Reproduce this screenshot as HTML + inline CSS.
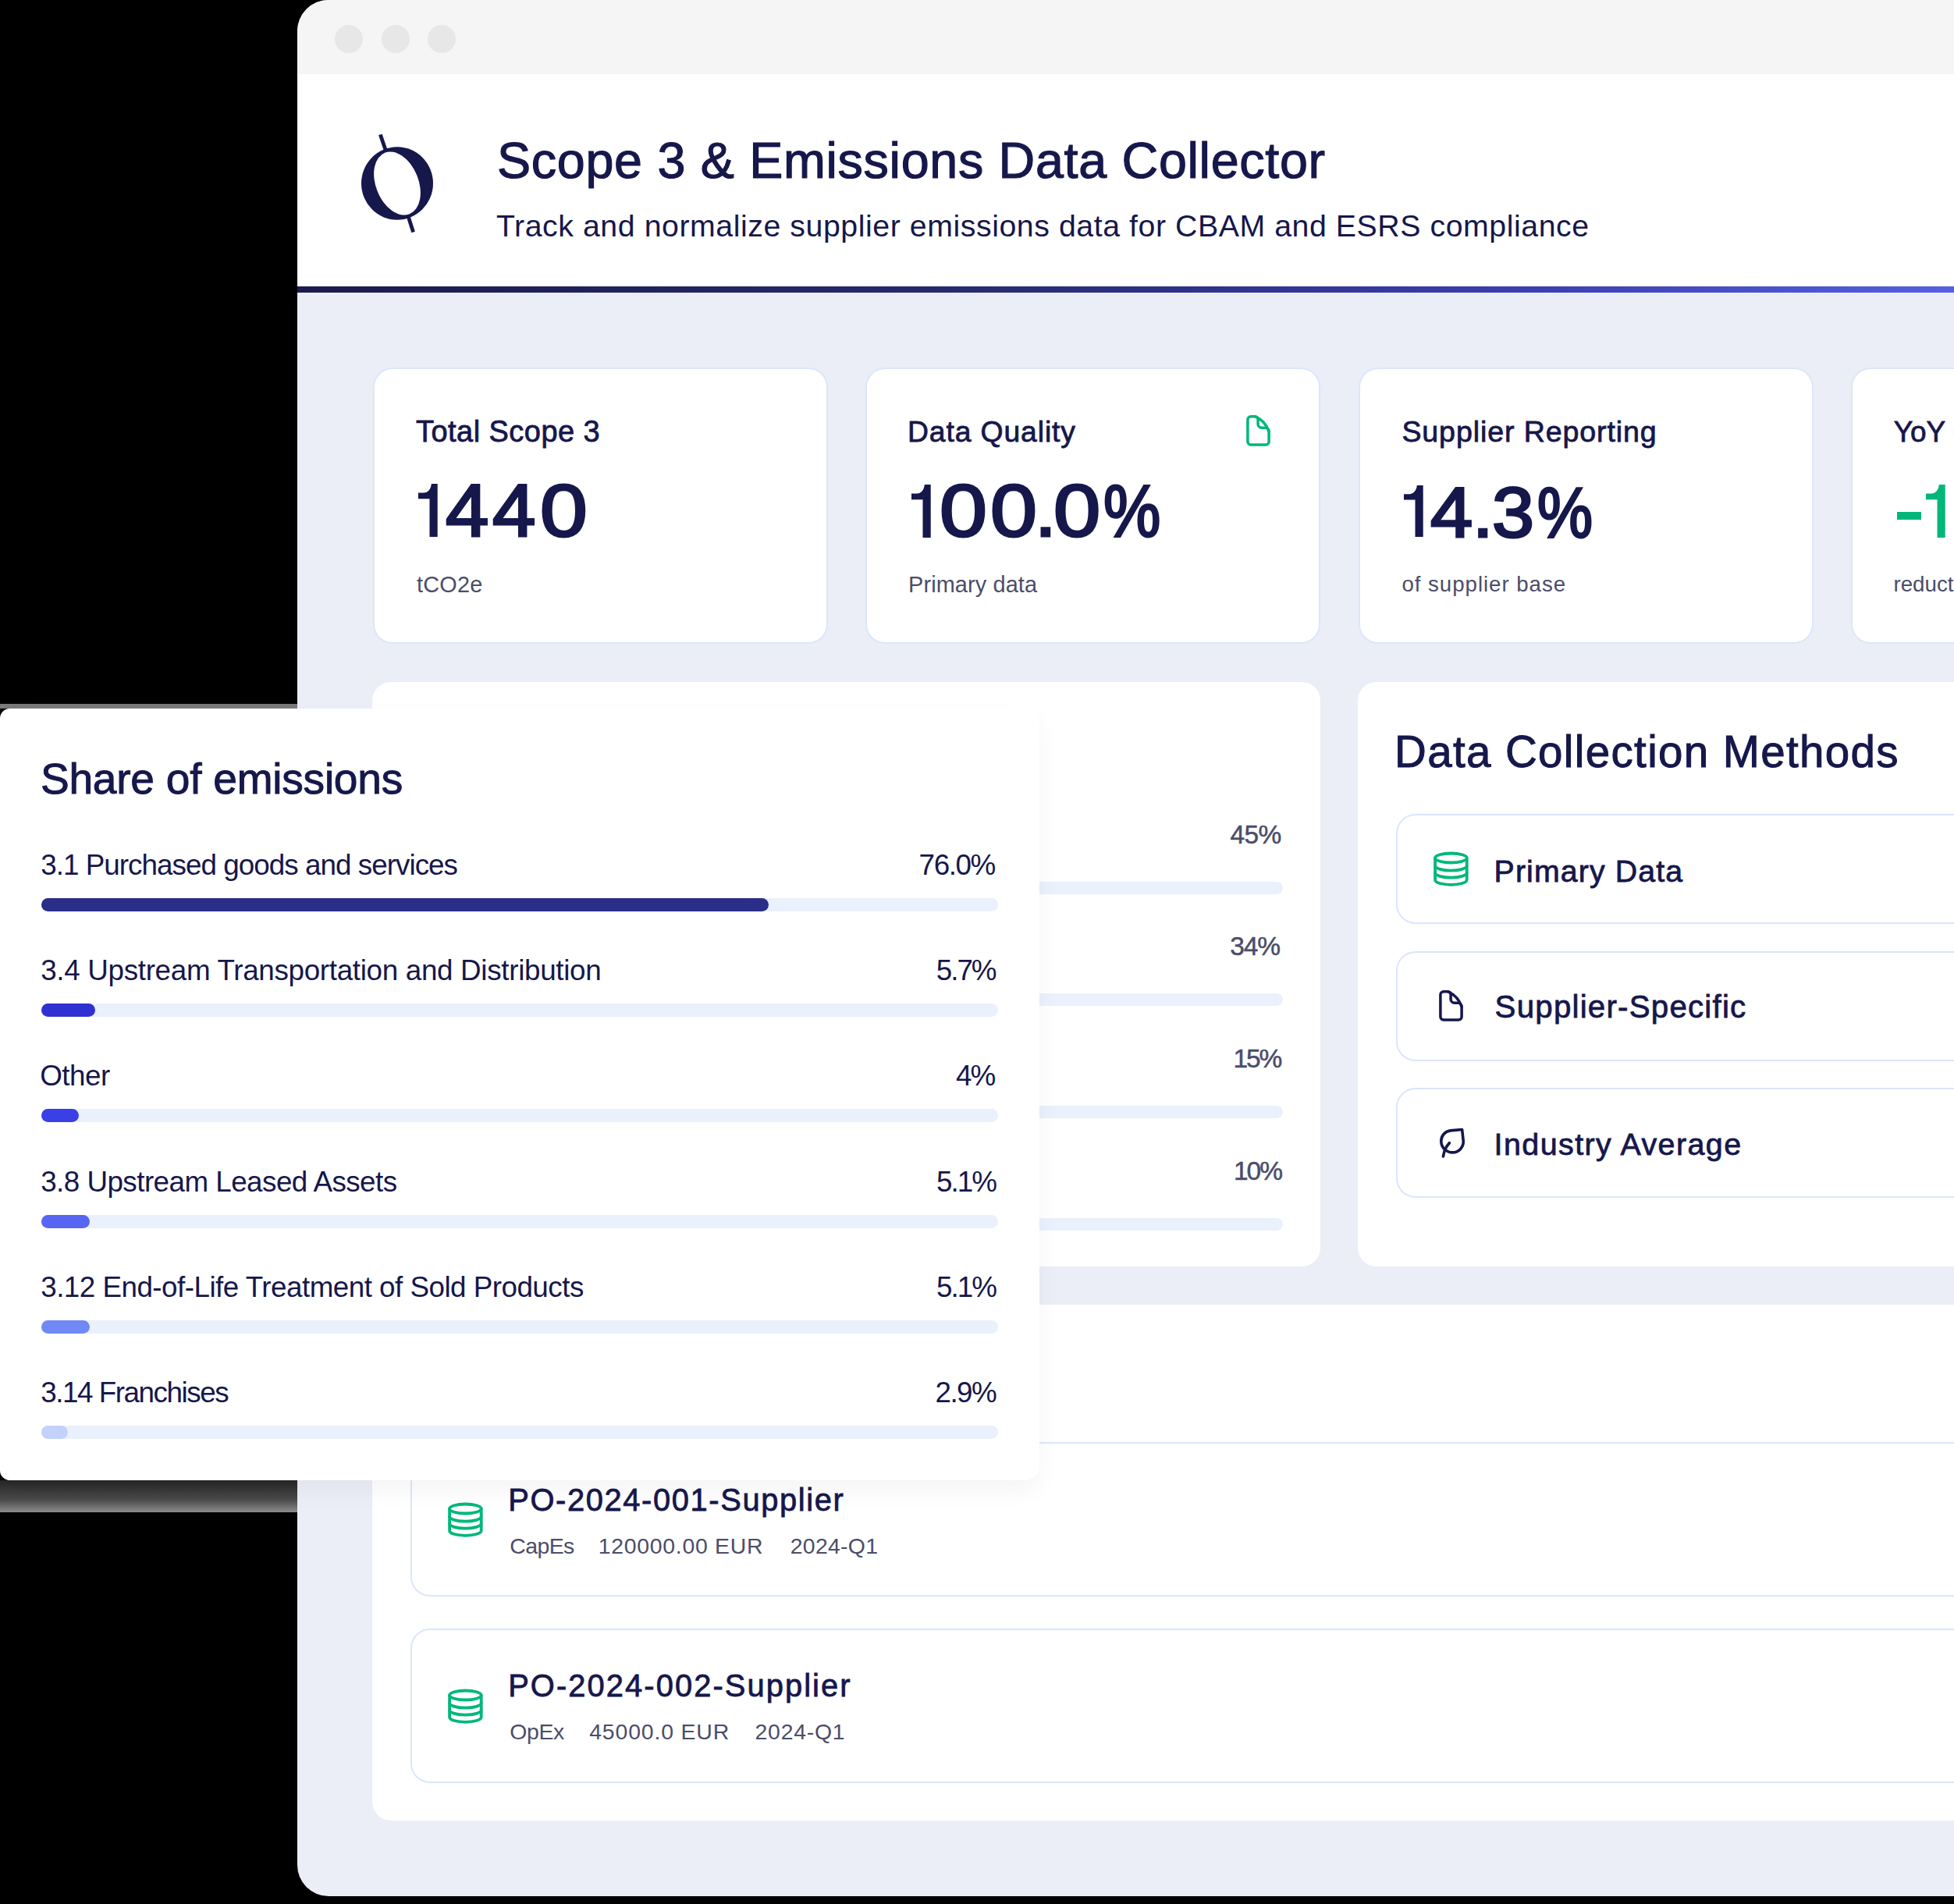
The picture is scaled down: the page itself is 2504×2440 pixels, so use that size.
<!DOCTYPE html><html><head><meta charset="utf-8"><title>Scope 3 &amp; Emissions Data Collector</title><style>html,body{margin:0;padding:0;overflow:hidden}body{width:2504px;height:2440px;background:#000;position:relative;overflow:hidden;font-family:"Liberation Sans",sans-serif}.b{position:absolute}.t{position:absolute;white-space:nowrap;font-family:"Liberation Sans",sans-serif}</style></head><body>
<div class="b" style="left:381.0px;top:0.0px;width:2300.0px;height:2430.0px;background:#ebeef7;border-radius:40px;overflow:hidden"></div>
<div class="b" style="left:381.0px;top:0.0px;width:2300.0px;height:95.0px;background:#f5f5f5;border-radius:40px 40px 0 0"></div>
<div class="b" style="left:428.9px;top:32.0px;width:36.0px;height:36.0px;background:#e7e7e7;border-radius:50%"></div>
<div class="b" style="left:488.8px;top:32.0px;width:36.0px;height:36.0px;background:#e7e7e7;border-radius:50%"></div>
<div class="b" style="left:548.3px;top:32.0px;width:36.0px;height:36.0px;background:#e7e7e7;border-radius:50%"></div>
<div class="b" style="left:381.0px;top:95.0px;width:2300.0px;height:272.0px;background:#fff"></div>
<div class="b" style="left:381.0px;top:367.0px;width:2123.0px;height:8.0px;background:linear-gradient(90deg,#1b1b4c 0%,#262a6e 40%,#3b40b0 75%,#5660de 100%)"></div>
<svg class="b" style="left:440px;top:160px" width="140" height="150" viewBox="440 160 140 150"><path fill="#16174b" fill-rule="evenodd" d="M509 188.3A46 46.7 0 1 1 509 281.7A46 46.7 0 1 1 509 188.3Z M509 235m0 0" /><ellipse cx="509" cy="235" rx="27.3" ry="42.3" transform="rotate(-22 509 235)" fill="#fff"/><path d="M487.4 172.6L494.2 192.6M523.2 277.4L529.6 297.5" stroke="#16174b" stroke-width="4.8"/></svg>
<div class="b" style="left:478.0px;top:471.0px;width:583.0px;height:353.5px;background:#fff;border:2px solid #dce6fc;border-radius:25px;box-sizing:border-box"></div>
<div class="b" style="left:1109.3px;top:471.0px;width:583.0px;height:353.5px;background:#fff;border:2px solid #dce6fc;border-radius:25px;box-sizing:border-box"></div>
<div class="b" style="left:1740.7px;top:471.0px;width:583.0px;height:353.5px;background:#fff;border:2px solid #dce6fc;border-radius:25px;box-sizing:border-box"></div>
<div class="b" style="left:2372.0px;top:471.0px;width:583.0px;height:353.5px;background:#fff;border:2px solid #dce6fc;border-radius:25px;box-sizing:border-box"></div>
<svg class="b" style="left:1592.6px;top:528.0px" width="44" height="48" viewBox="0 0 44 48" fill="none" stroke="#00b77a" stroke-width="3.5" stroke-linecap="round" stroke-linejoin="round"><path d="M33.1 25.3V37.9A4 4 0 0 1 29.1 41.9H9.9A4 4 0 0 1 5.9 37.9V9.7A4 4 0 0 1 9.9 5.7H15.2A30 33 0 0 1 33.1 25.3Z"/><path d="M15.2 5.7A4 4 0 0 1 19.1 9.7V15.4A4.8 4.8 0 0 0 23.9 20.2H28.6A4.5 5.1 0 0 1 33.1 25.3"/></svg>
<div class="b" style="left:477.0px;top:874.0px;width:1215.0px;height:749.0px;background:#fff;border-radius:24px"></div>
<div class="b" style="left:1740.0px;top:874.0px;width:1215.0px;height:749.0px;background:#fff;border-radius:24px"></div>
<div class="b" style="left:527.0px;top:1129.7px;width:1117.0px;height:16.0px;background:#eaf0fc;border-radius:8px"></div>
<div class="b" style="left:527.0px;top:1273.2px;width:1117.0px;height:16.0px;background:#eaf0fc;border-radius:8px"></div>
<div class="b" style="left:527.0px;top:1417.0px;width:1117.0px;height:16.0px;background:#eaf0fc;border-radius:8px"></div>
<div class="b" style="left:527.0px;top:1560.6px;width:1117.0px;height:16.0px;background:#eaf0fc;border-radius:8px"></div>
<div class="b" style="left:1788.7px;top:1043.0px;width:1120.0px;height:141.0px;background:#fff;border:2px solid #dce6fc;border-radius:25px;box-sizing:border-box"></div>
<div class="b" style="left:1788.7px;top:1218.5px;width:1120.0px;height:141.0px;background:#fff;border:2px solid #dce6fc;border-radius:25px;box-sizing:border-box"></div>
<div class="b" style="left:1788.7px;top:1393.8px;width:1120.0px;height:141.0px;background:#fff;border:2px solid #dce6fc;border-radius:25px;box-sizing:border-box"></div>
<svg class="b" style="left:1835.0px;top:1089.0px" width="50" height="50" viewBox="0 0 50 50" fill="none" stroke="#00b77a" stroke-width="3.8" stroke-linecap="round" stroke-linejoin="round"><ellipse cx="24.4" cy="10.5" rx="20.3" ry="6"/><path d="M4.1 10.5V38.8A20.3 6 0 0 0 44.7 38.8V10.5"/><path d="M4.1 20.6A20.3 6 0 0 0 44.7 20.6"/><path d="M4.1 29.6A20.3 6 0 0 0 44.7 29.6"/></svg>
<svg class="b" style="left:1840.0px;top:1265.0px" width="44" height="48" viewBox="0 0 44 48" fill="none" stroke="#16174b" stroke-width="3.5" stroke-linecap="round" stroke-linejoin="round"><path d="M33.1 25.3V37.9A4 4 0 0 1 29.1 41.9H9.9A4 4 0 0 1 5.9 37.9V9.7A4 4 0 0 1 9.9 5.7H15.2A30 33 0 0 1 33.1 25.3Z"/><path d="M15.2 5.7A4 4 0 0 1 19.1 9.7V15.4A4.8 4.8 0 0 0 23.9 20.2H28.6A4.5 5.1 0 0 1 33.1 25.3"/></svg>
<svg class="b" style="left:1820.0px;top:1420.0px" width="80" height="80" viewBox="0 0 80 80" fill="none" stroke="#16174b" stroke-width="3.6" stroke-linecap="round" stroke-linejoin="round"><path d="M53.6 27.5L38.5 28.9C31.5 29.9 26.8 35.7 26.8 42.5C26.8 50.6 33.4 56.9 41.6 56.9C49.4 56.9 55.3 50.4 55.3 42.5L53.6 27.5Z"/><path d="M37.4 44.7C34.2 48.4 31.9 51.8 31 55.2L29.4 62"/></svg>
<div class="b" style="left:477.0px;top:1672.0px;width:2100.0px;height:661.0px;background:#fff;border-radius:24px"></div>
<div class="b" style="left:526.0px;top:1847.6px;width:2100.0px;height:198.8px;background:#fff;border:2px solid #dce6fc;border-radius:25px;box-sizing:border-box"></div>
<div class="b" style="left:526.0px;top:2086.7px;width:2100.0px;height:198.8px;background:#fff;border:2px solid #dce6fc;border-radius:25px;box-sizing:border-box"></div>
<svg class="b" style="left:572.2px;top:1922.8px" width="50" height="50" viewBox="0 0 50 50" fill="none" stroke="#00b77a" stroke-width="3.8" stroke-linecap="round" stroke-linejoin="round"><ellipse cx="24.4" cy="10.5" rx="20.3" ry="6"/><path d="M4.1 10.5V38.8A20.3 6 0 0 0 44.7 38.8V10.5"/><path d="M4.1 20.6A20.3 6 0 0 0 44.7 20.6"/><path d="M4.1 29.6A20.3 6 0 0 0 44.7 29.6"/></svg>
<div class="b" style="left:2430.9px;top:656.0px;width:31.5px;height:10.0px;background:#00b77a"></div>
<svg class="b" style="left:536.3px;top:620.3px" width="26" height="70.0" viewBox="0 0 26 70" preserveAspectRatio="none"><path fill="#16174b" d="M16.8 0H24.7V68.1H14.5V19.2H0V11.5H7C12 11.5 16.3 7 16.8 0Z"/></svg>
<div class="t" style="left:571.2px;top:608.2px;font-size:94.35px;line-height:94.35px;color:#16174b;-webkit-text-stroke:3px #16174b;transform:scaleX(1.0540);transform-origin:0 0">4</div><div class="t" style="left:631.1px;top:608.2px;font-size:94.35px;line-height:94.35px;color:#16174b;-webkit-text-stroke:3px #16174b;transform:scaleX(1.0560);transform-origin:0 0">4</div><div class="t" style="left:692.0px;top:608.2px;font-size:94.35px;line-height:94.35px;color:#16174b;-webkit-text-stroke:3px #16174b;transform:scaleX(1.1583);transform-origin:0 0">0</div>
<div class="t" style="left:1203.8px;top:608.3px;font-size:94.35px;line-height:94.35px;color:#16174b;-webkit-text-stroke:3px #16174b;transform:scaleX(1.1604);transform-origin:0 0">0</div><div class="t" style="left:1269.1px;top:608.3px;font-size:94.35px;line-height:94.35px;color:#16174b;-webkit-text-stroke:3px #16174b;transform:scaleX(1.1417);transform-origin:0 0">0</div><div class="t" style="left:1325.7px;top:608.3px;font-size:94.35px;line-height:94.35px;color:#16174b;-webkit-text-stroke:3px #16174b;transform:scaleX(1.0583);transform-origin:0 0">.</div><div class="t" style="left:1350.0px;top:608.3px;font-size:94.35px;line-height:94.35px;color:#16174b;-webkit-text-stroke:3px #16174b;transform:scaleX(1.1479);transform-origin:0 0">0</div><div class="t" style="left:1414.1px;top:608.3px;font-size:94.35px;line-height:94.35px;color:#16174b;-webkit-text-stroke:3px #16174b;transform:scaleX(0.8738);transform-origin:0 0">%</div>
<div class="t" style="left:1833.1px;top:610.7px;font-size:91.40px;line-height:91.40px;color:#16174b;-webkit-text-stroke:3px #16174b;transform:scaleX(1.0653);transform-origin:0 0">4</div><div class="t" style="left:1886.8px;top:610.7px;font-size:91.40px;line-height:91.40px;color:#16174b;-webkit-text-stroke:3px #16174b;transform:scaleX(1.0409);transform-origin:0 0">.</div><div class="t" style="left:1912.2px;top:610.7px;font-size:91.40px;line-height:91.40px;color:#16174b;-webkit-text-stroke:3px #16174b;transform:scaleX(1.0624);transform-origin:0 0">3</div><div class="t" style="left:1970.2px;top:610.7px;font-size:91.40px;line-height:91.40px;color:#16174b;-webkit-text-stroke:3px #16174b;transform:scaleX(0.8736);transform-origin:0 0">%</div>
<svg class="b" style="left:1167.8px;top:620.5px" width="26" height="70.0" viewBox="0 0 26 70" preserveAspectRatio="none"><path fill="#16174b" d="M16.8 0H24.7V68.1H14.5V19.2H0V11.5H7C12 11.5 16.3 7 16.8 0Z"/></svg>
<svg class="b" style="left:1798.7px;top:622.3px" width="26" height="67.8" viewBox="0 0 26 70" preserveAspectRatio="none"><path fill="#16174b" d="M16.8 0H24.7V68.1H14.5V19.2H0V11.5H7C12 11.5 16.3 7 16.8 0Z"/></svg>
<svg class="b" style="left:2467.6px;top:620.5px" width="26" height="70.0" viewBox="0 0 26 70" preserveAspectRatio="none"><path fill="#00b77a" d="M16.8 0H24.7V68.1H14.5V19.2H0V11.5H7C12 11.5 16.3 7 16.8 0Z"/></svg>
<svg class="b" style="left:572.2px;top:2161.8px" width="50" height="50" viewBox="0 0 50 50" fill="none" stroke="#00b77a" stroke-width="3.8" stroke-linecap="round" stroke-linejoin="round"><ellipse cx="24.4" cy="10.5" rx="20.3" ry="6"/><path d="M4.1 10.5V38.8A20.3 6 0 0 0 44.7 38.8V10.5"/><path d="M4.1 20.6A20.3 6 0 0 0 44.7 20.6"/><path d="M4.1 29.6A20.3 6 0 0 0 44.7 29.6"/></svg>
<div class="b" style="left:0.0px;top:902.0px;width:381.0px;height:6.0px;background:#7a7a7a"></div>
<div class="b" style="left:0.0px;top:1897.0px;width:381.0px;height:41.0px;background:linear-gradient(180deg,#262626 0%,#4a4a4a 60%,#8c8c8c 100%)"></div>
<div class="b" style="left:0.0px;top:908.0px;width:1332.0px;height:989.0px;background:#fff;border-radius:12.5px 19px 19px 12.5px;box-shadow:0 14px 30px rgba(0,0,0,0.045)"></div>
<div class="b" style="left:53.0px;top:1150.6px;width:1226.0px;height:17.0px;background:#eaf0fc;border-radius:8.5px"></div>
<div class="b" style="left:53.0px;top:1150.6px;width:932.0px;height:17.0px;background:#2b2e89;border-radius:8.5px"></div>
<div class="b" style="left:53.0px;top:1285.9px;width:1226.0px;height:17.0px;background:#eaf0fc;border-radius:8.5px"></div>
<div class="b" style="left:53.0px;top:1285.9px;width:69.0px;height:17.0px;background:#3030d2;border-radius:8.5px"></div>
<div class="b" style="left:53.0px;top:1421.3px;width:1226.0px;height:17.0px;background:#eaf0fc;border-radius:8.5px"></div>
<div class="b" style="left:53.0px;top:1421.3px;width:48.0px;height:17.0px;background:#3b3fe6;border-radius:8.5px"></div>
<div class="b" style="left:53.0px;top:1556.6px;width:1226.0px;height:17.0px;background:#eaf0fc;border-radius:8.5px"></div>
<div class="b" style="left:53.0px;top:1556.6px;width:61.6px;height:17.0px;background:#5865f2;border-radius:8.5px"></div>
<div class="b" style="left:53.0px;top:1692.0px;width:1226.0px;height:17.0px;background:#eaf0fc;border-radius:8.5px"></div>
<div class="b" style="left:53.0px;top:1692.0px;width:61.6px;height:17.0px;background:#7189f5;border-radius:8.5px"></div>
<div class="b" style="left:53.0px;top:1827.3px;width:1226.0px;height:17.0px;background:#eaf0fc;border-radius:8.5px"></div>
<div class="b" style="left:53.0px;top:1827.3px;width:34.2px;height:17.0px;background:#c3d2fb;border-radius:8.5px"></div>
<div class="t" style="left:637.0px;top:174.3px;font-size:64.64px;line-height:64.64px;font-weight:400;letter-spacing:0.70px;color:#16174b;-webkit-text-stroke:1.20px #16174b;">Scope 3 &amp; Emissions Data Collector</div>
<div class="t" style="left:636.0px;top:269.6px;font-size:39.28px;line-height:39.28px;font-weight:400;letter-spacing:0.56px;color:#16174b;">Track and normalize supplier emissions data for CBAM and ESRS compliance</div>
<div class="t" style="left:533.0px;top:535.3px;font-size:37.97px;line-height:37.97px;font-weight:400;letter-spacing:0.47px;color:#16174b;-webkit-text-stroke:0.80px #16174b;">Total Scope 3</div>
<div class="t" style="left:534.0px;top:734.9px;font-size:28.84px;line-height:28.84px;font-weight:400;letter-spacing:0.25px;color:#4b4d69;">tCO2e</div>
<div class="t" style="left:1163.0px;top:535.4px;font-size:37.25px;line-height:37.25px;font-weight:400;letter-spacing:0.91px;color:#16174b;-webkit-text-stroke:0.80px #16174b;">Data Quality</div>
<div class="t" style="left:1164.0px;top:734.9px;font-size:28.84px;line-height:28.84px;font-weight:400;letter-spacing:0.15px;color:#4b4d69;">Primary data</div>
<div class="t" style="left:1796.4px;top:535.4px;font-size:37.54px;line-height:37.54px;font-weight:400;letter-spacing:0.91px;color:#16174b;-webkit-text-stroke:0.80px #16174b;">Supplier Reporting</div>
<div class="t" style="left:1796.4px;top:735.1px;font-size:27.68px;line-height:27.68px;font-weight:400;letter-spacing:0.96px;color:#4b4d69;">of supplier base</div>
<div class="t" style="left:2426.7px;top:535.7px;font-size:36.96px;line-height:36.96px;font-weight:400;letter-spacing:0.00px;color:#16174b;-webkit-text-stroke:0.80px #16174b;">YoY Change</div>
<div class="t" style="left:2426.5px;top:735.1px;font-size:27.68px;line-height:27.68px;font-weight:400;letter-spacing:0.00px;color:#4b4d69;">reduction</div>
<div class="t" style="left:1576.6px;top:1052.6px;font-size:33.48px;line-height:33.48px;font-weight:400;letter-spacing:-0.65px;color:#4b4d69;-webkit-text-stroke:0.50px #4b4d69;">45%</div>
<div class="t" style="left:1576.3px;top:1196.2px;font-size:33.48px;line-height:33.48px;font-weight:400;letter-spacing:-1.15px;color:#4b4d69;-webkit-text-stroke:0.50px #4b4d69;">34%</div>
<div class="t" style="left:1580.4px;top:1339.6px;font-size:33.48px;line-height:33.48px;font-weight:400;letter-spacing:-2.00px;color:#4b4d69;-webkit-text-stroke:0.50px #4b4d69;">15%</div>
<div class="t" style="left:1581.0px;top:1483.6px;font-size:33.48px;line-height:33.48px;font-weight:400;letter-spacing:-2.00px;color:#4b4d69;-webkit-text-stroke:0.50px #4b4d69;">10%</div>
<div class="t" style="left:1787.0px;top:935.7px;font-size:56.52px;line-height:56.52px;font-weight:400;letter-spacing:1.36px;color:#16174b;-webkit-text-stroke:1.00px #16174b;">Data Collection Methods</div>
<div class="t" style="left:1914.6px;top:1096.7px;font-size:39.28px;line-height:39.28px;font-weight:400;letter-spacing:1.13px;color:#16174b;-webkit-text-stroke:0.80px #16174b;">Primary Data</div>
<div class="t" style="left:1915.6px;top:1271.4px;font-size:40.29px;line-height:40.29px;font-weight:400;letter-spacing:1.21px;color:#16174b;-webkit-text-stroke:0.80px #16174b;">Supplier-Specific</div>
<div class="t" style="left:1914.6px;top:1447.1px;font-size:39.42px;line-height:39.42px;font-weight:400;letter-spacing:1.43px;color:#16174b;-webkit-text-stroke:0.80px #16174b;">Industry Average</div>
<div class="t" style="left:52.0px;top:971.0px;font-size:55.07px;line-height:55.07px;font-weight:400;letter-spacing:-0.24px;color:#16174b;-webkit-text-stroke:1.00px #16174b;">Share of emissions</div>
<div class="t" style="left:52.2px;top:1090.7px;font-size:36.81px;line-height:36.81px;font-weight:400;letter-spacing:-0.96px;color:#16174b;">3.1 Purchased goods and services</div>
<div class="t" style="left:1177.6px;top:1090.7px;font-size:36.81px;line-height:36.81px;font-weight:400;letter-spacing:-1.40px;color:#16174b;">76.0%</div>
<div class="t" style="left:52.2px;top:1226.0px;font-size:36.81px;line-height:36.81px;font-weight:400;letter-spacing:-0.32px;color:#16174b;">3.4 Upstream Transportation and Distribution</div>
<div class="t" style="left:1199.7px;top:1226.0px;font-size:36.81px;line-height:36.81px;font-weight:400;letter-spacing:-2.00px;color:#16174b;">5.7%</div>
<div class="t" style="left:51.2px;top:1361.3px;font-size:36.81px;line-height:36.81px;font-weight:400;letter-spacing:-0.50px;color:#16174b;">Other</div>
<div class="t" style="left:1225.0px;top:1361.3px;font-size:36.81px;line-height:36.81px;font-weight:400;letter-spacing:-2.00px;color:#16174b;">4%</div>
<div class="t" style="left:52.2px;top:1496.6px;font-size:36.81px;line-height:36.81px;font-weight:400;letter-spacing:-0.54px;color:#16174b;">3.8 Upstream Leased Assets</div>
<div class="t" style="left:1200.0px;top:1496.6px;font-size:36.81px;line-height:36.81px;font-weight:400;letter-spacing:-2.00px;color:#16174b;">5.1%</div>
<div class="t" style="left:52.2px;top:1631.9px;font-size:36.81px;line-height:36.81px;font-weight:400;letter-spacing:-0.52px;color:#16174b;">3.12 End-of-Life Treatment of Sold Products</div>
<div class="t" style="left:1200.0px;top:1631.9px;font-size:36.81px;line-height:36.81px;font-weight:400;letter-spacing:-2.00px;color:#16174b;">5.1%</div>
<div class="t" style="left:52.2px;top:1767.2px;font-size:36.81px;line-height:36.81px;font-weight:400;letter-spacing:-1.46px;color:#16174b;">3.14 Franchises</div>
<div class="t" style="left:1198.6px;top:1767.2px;font-size:36.81px;line-height:36.81px;font-weight:400;letter-spacing:-1.60px;color:#16174b;">2.9%</div>
<div class="t" style="left:651.2px;top:1902.6px;font-size:39.86px;line-height:39.86px;font-weight:400;letter-spacing:1.62px;color:#16174b;-webkit-text-stroke:0.80px #16174b;">PO-2024-001-Supplier</div>
<div class="t" style="left:653.2px;top:1966.8px;font-size:28.41px;line-height:28.41px;font-weight:400;letter-spacing:-0.55px;color:#4b4d69;">CapEs</div>
<div class="t" style="left:766.7px;top:1966.8px;font-size:28.41px;line-height:28.41px;font-weight:400;letter-spacing:0.72px;color:#4b4d69;">120000.00 EUR</div>
<div class="t" style="left:1012.8px;top:1966.8px;font-size:28.41px;line-height:28.41px;font-weight:400;letter-spacing:0.27px;color:#4b4d69;">2024-Q1</div>
<div class="t" style="left:651.2px;top:2140.6px;font-size:39.86px;line-height:39.86px;font-weight:400;letter-spacing:2.08px;color:#16174b;-webkit-text-stroke:0.80px #16174b;">PO-2024-002-Supplier</div>
<div class="t" style="left:653.2px;top:2205.0px;font-size:28.41px;line-height:28.41px;font-weight:400;letter-spacing:-0.33px;color:#4b4d69;">OpEx</div>
<div class="t" style="left:755.2px;top:2205.0px;font-size:28.41px;line-height:28.41px;font-weight:400;letter-spacing:0.85px;color:#4b4d69;">45000.0 EUR</div>
<div class="t" style="left:967.5px;top:2205.0px;font-size:28.41px;line-height:28.41px;font-weight:400;letter-spacing:0.77px;color:#4b4d69;">2024-Q1</div>
</body></html>
